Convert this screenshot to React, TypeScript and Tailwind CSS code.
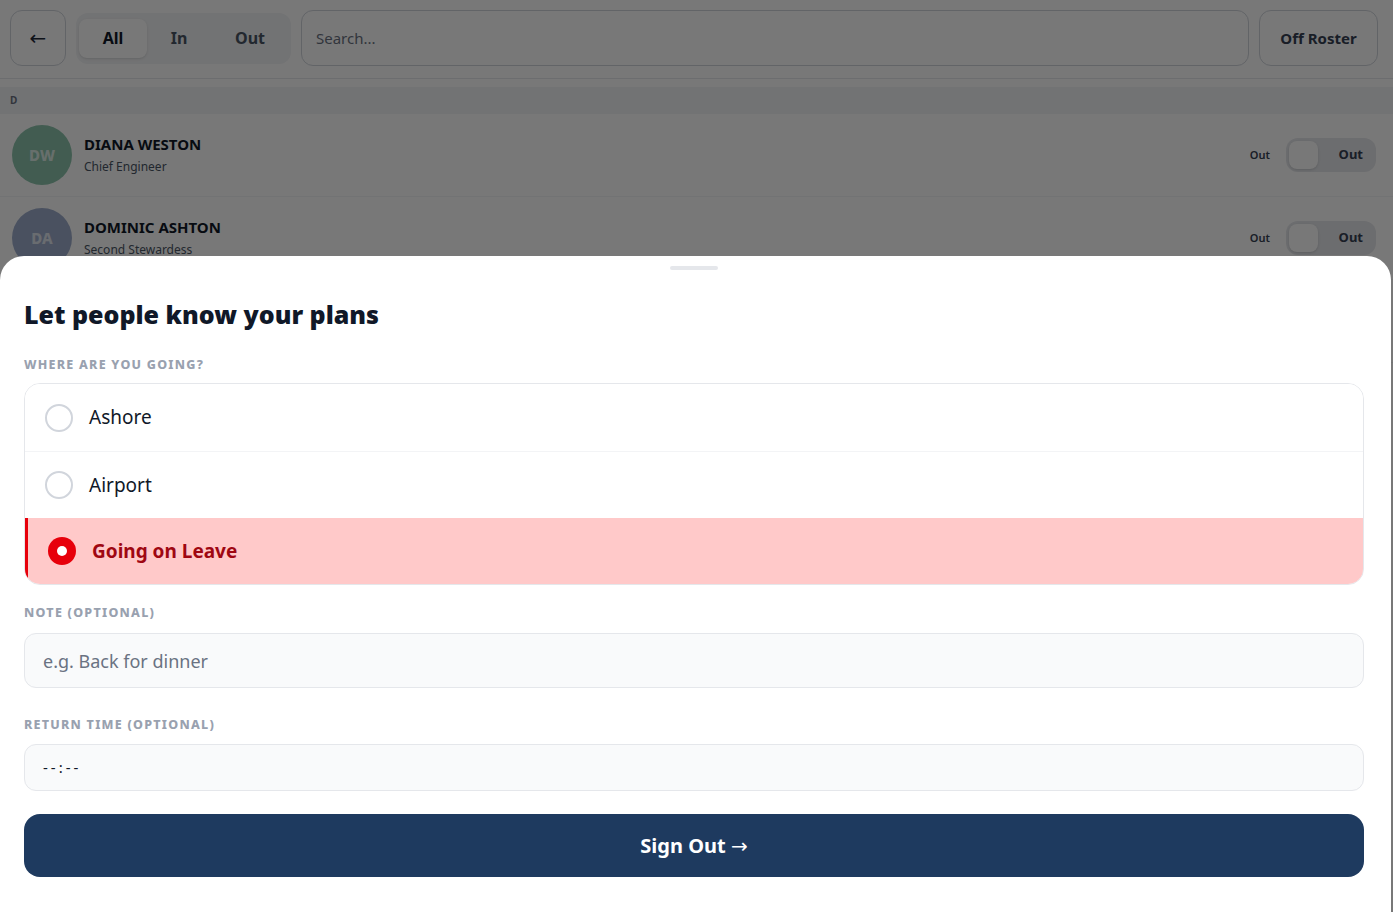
import { useState } from "react";

const font = { fontFamily: '"Noto Sans", "Open Sans", sans-serif' };
const arrowFont = { fontFamily: '"DejaVu Sans", sans-serif' };

const crew = [
  { initials: "DW", name: "DIANA WESTON", role: "Chief Engineer", color: "bg-[#8cc4ac]" },
  { initials: "DA", name: "DOMINIC ASHTON", role: "Second Stewardess", color: "bg-[#9eadcc]" },
  { initials: "DK", name: "DANIEL KERR", role: "Deckhand", color: "bg-sky-200" },
];

function RosterBehind() {
  return (
    <div className="bg-white min-h-[912px]">
      <div className="flex items-center gap-[10px] pl-[10px] pr-[15px] pt-[10px] pb-3 border-b border-gray-200">
        <button className="w-14 h-14 rounded-xl border border-gray-300 text-[20px] text-gray-800 flex items-center justify-center" style={arrowFont}>
          ←
        </button>
        <div className="flex items-center bg-gray-100 rounded-xl p-[2px] h-[51px] w-[215px]">
          <div className="h-[39px] w-[68px] ml-[1px] rounded-lg bg-white shadow-sm flex items-center justify-center font-bold text-[16px] text-gray-900">
            All
          </div>
          <div className="w-[64px] text-center font-bold text-[16px] text-gray-600">In</div>
          <div className="w-[78px] text-center font-bold text-[16px] text-gray-600">Out</div>
        </div>
        <div className="flex-1 h-14 rounded-xl border border-gray-300 flex items-center px-[14px] text-[15px] text-gray-500">
          Search...
        </div>
        <button className="h-14 w-[119px] rounded-xl border border-gray-300 font-bold text-[15px] text-gray-700">
          Off Roster
        </button>
      </div>
      <div className="mt-2 bg-gray-100 h-[27px] flex items-center px-[10px] text-[10px] font-bold text-gray-500">D</div>
      {crew.map((c) => (
        <div key={c.initials} className="flex items-center h-[83px] px-3 border-b border-gray-100">
          <div className={`w-[60px] h-[60px] rounded-full ${c.color} flex items-center justify-center text-white/70 font-extrabold text-[15px]`}>
            {c.initials}
          </div>
          <div className="ml-3 flex-1">
            <div className="font-bold text-[15px] text-gray-900 leading-5">{c.name}</div>
            <div className="text-[12px] text-gray-600 mt-[4px]">{c.role}</div>
          </div>
          <span className="text-[11px] font-semibold text-gray-700 mr-4">Out</span>
          <div className="w-[90px] h-[34px] rounded-xl bg-gray-200 flex items-center px-[3px] mr-[5px]">
            <div className="w-[29px] h-[28px] rounded-lg bg-white shadow" />
            <span className="ml-auto mr-[10px] text-[13px] font-bold text-gray-700">Out</span>
          </div>
        </div>
      ))}
    </div>
  );
}

type Opt = "Ashore" | "Airport" | "Going on Leave";

const labelCls = "text-[12.5px] font-extrabold tracking-[0.1em] text-gray-400 leading-4";

export default function App() {
  const [choice, setChoice] = useState<Opt>("Going on Leave");
  const options: Opt[] = ["Ashore", "Airport", "Going on Leave"];

  return (
    <div className="relative w-full h-[912px] overflow-hidden" style={font}>
      <RosterBehind />
      <div className="absolute inset-0 bg-black/[0.53]" />
      <div className="absolute left-0 right-[2px] bottom-0 top-[256px] bg-white rounded-t-3xl pl-6 pr-[27px] pt-[10px]">
        <div className="mx-auto w-12 h-1 rounded-full bg-gray-200" />
        <h2 className="mt-[28px] text-[25px] leading-8 font-black text-gray-900">Let people know your plans</h2>
        <div className={`mt-[27px] ${labelCls}`}>WHERE ARE YOU GOING?</div>
        <div className="mt-[10px] rounded-2xl border border-gray-200 overflow-hidden">
          {options.map((o, i) => {
            const sel = o === choice;
            return (
              <button
                key={o}
                onClick={() => setChoice(o)}
                className={`w-full flex items-center text-left ${i === 2 ? "h-[66px]" : "h-[67px]"} ${
                  sel ? "bg-red-200 border-l-[3px] border-red-600 pl-[20px]" : "bg-white pl-5"
                } ${i > 0 && !sel ? "border-t border-gray-100" : ""}`}
              >
                {sel ? (
                  <span className="w-7 h-7 rounded-full bg-red-600 flex items-center justify-center">
                    <span className="w-[10px] h-[10px] rounded-full bg-white" />
                  </span>
                ) : (
                  <span className="w-7 h-7 rounded-full border-2 border-gray-300" />
                )}
                <span className={`ml-4 text-[19px] ${sel ? "font-bold text-red-800" : "text-gray-900"}`}>{o}</span>
              </button>
            );
          })}
        </div>
        <div className={`mt-[20px] ${labelCls}`}>NOTE (OPTIONAL)</div>
        <input
          className="mt-[12px] w-full h-[55px] rounded-xl bg-gray-50 border border-gray-200 px-[18px] text-[18px] placeholder:text-gray-500 outline-none"
          placeholder="e.g. Back for dinner"
        />
        <div className={`mt-[29px] ${labelCls}`}>RETURN TIME (OPTIONAL)</div>
        <div className="mt-[11px] w-full h-[47px] rounded-xl bg-gray-50 border border-gray-200 px-[18px] flex items-center text-[15px] tracking-[0.2em] text-gray-900">
          --:--
        </div>
        <button className="mt-[23px] w-full h-[63px] rounded-2xl bg-[#1e3a5f] text-white font-bold text-[20px]">
          Sign Out <span style={arrowFont} className="font-normal text-[20px]">→</span>
        </button>
      </div>
    </div>
  );
}
